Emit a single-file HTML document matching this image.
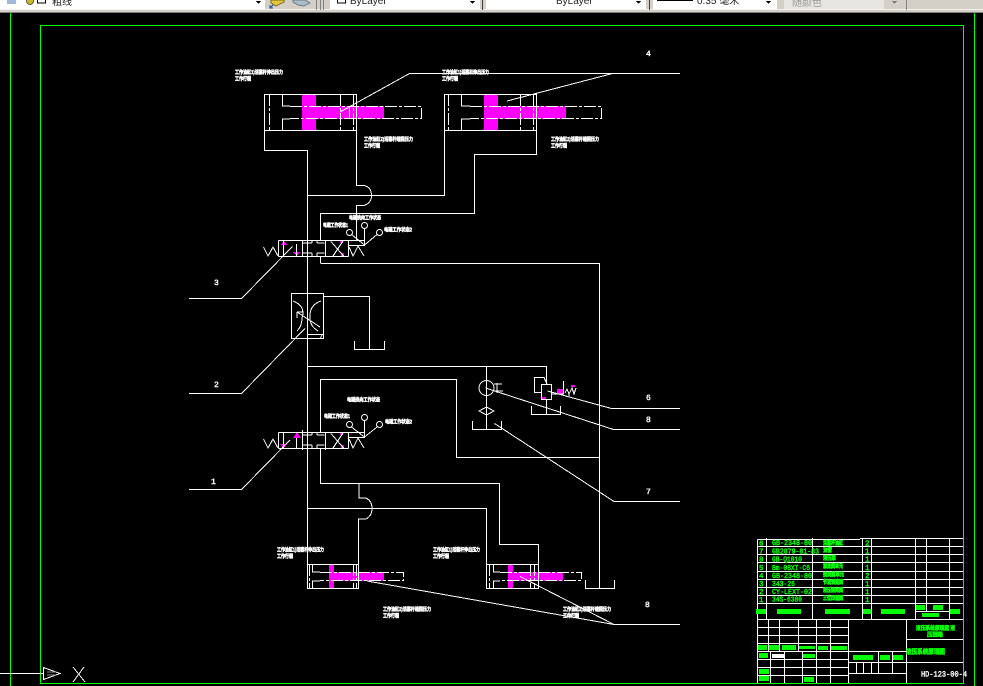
<!DOCTYPE html>
<html><head><meta charset="utf-8"><style>
html,body{margin:0;padding:0;background:#000;width:983px;height:686px;overflow:hidden}
svg{display:block;position:absolute;left:0;top:0}
text{font-family:"Liberation Sans","Noto Sans CJK SC",sans-serif}
.w{fill:none;stroke:#fff;stroke-width:1}
.d{fill:none;stroke:#fff;stroke-width:1;stroke-dasharray:12 2 3 2}
.g{fill:none;stroke:#0f0;stroke-width:1}
.t{fill:#fff;stroke:#fff;stroke-width:.5;font-size:5.5px;font-weight:bold}
.n{fill:#fff;stroke:#fff;stroke-width:.4;font-size:8px;font-family:"Liberation Mono",monospace}
.c{fill:#0f0;stroke:#0f0;stroke-width:.45;font-size:7.5px;font-family:"Liberation Mono",monospace}
.m{fill:#0f0;stroke:#0f0;stroke-width:.55;font-size:6px;font-weight:bold}
</style></head><body>
<svg width="983" height="686" viewBox="0 0 983 686" xmlns="http://www.w3.org/2000/svg" shape-rendering="crispEdges">
<rect width="983" height="686" fill="#000"/>
<!-- toolbar -->
<rect width="983" height="11" fill="#d4d0c8"/>
<rect y="9" width="983" height="1" fill="#f2f1ec"/>
<rect y="10" width="983" height="2" fill="#d4d0c8"/>
<rect y="12" width="983" height="1" fill="#808080"/>
<rect width="265" height="9" fill="#fff"/>
<rect x="330" width="150" height="9" fill="#fff"/>
<rect x="486" width="160" height="9" fill="#fff"/>
<rect x="653" width="124" height="9" fill="#fff"/>
<rect x="784" width="100" height="9" fill="#e8e6e0"/>
<rect x="884" width="20" height="9" fill="#d4d0c8"/>
<rect x="906" width="1" height="10" fill="#808080"/>
<rect x="316" width="1" height="10" fill="#808080"/><rect x="320" width="1" height="10" fill="#808080"/><rect x="323" width="1" height="10" fill="#808080"/>
<rect x="482" width="1" height="10" fill="#404040"/><rect x="649" width="1" height="10" fill="#404040"/>
<rect x="7" y="0" width="9" height="4" fill="#9fb9d8"/>
<circle cx="30" cy="1" r="3.5" fill="#c8b820" stroke="#665"/>
<rect x="37.500" y="-3" width="8" height="6" fill="#fff" stroke="#000"/>
<text x="52" y="5" font-size="10" fill="#222">粗线</text>
<path d="M256 1h5l-2.500 3z" fill="#000"/>
<path d="M271 0h13v2l-8 4-5-3z" fill="#e5c63c" stroke="#776a20"/>
<path d="M270 8l3-3M270 5v3h3" stroke="#1c4fa0" fill="none"/>
<path d="M293 0h12l5 3-6 3-6-1-5-3z" fill="#a9bcc8" stroke="#6a7a86"/>
<rect x="337.500" y="-3" width="8" height="6" fill="#fff" stroke="#000"/>
<text x="350" y="4" font-size="10" fill="#222">ByLayer</text>
<path d="M470 1h5l-2.500 3z" fill="#000"/>
<text x="556" y="4" font-size="10" fill="#222">ByLayer</text>
<path d="M636 1h5l-2.500 3z" fill="#000"/>
<rect x="657" y="0" width="36" height="1" fill="#000"/>
<text x="697" y="4" font-size="10" fill="#222">0.35 毫米</text>
<path d="M766 1h5l-2.500 3z" fill="#000"/>
<text x="792" y="6" font-size="10" fill="#999">随颜色</text>
<path d="M892 1h5l-2.500 3z" fill="#777"/>

<!-- frame -->
<path class="g" d="M10.500 13V686M974.500 13V686M40.500 25.500H963.500V683.500H40.500Z"/>

<!-- magenta -->
<g fill="#f0f">
<rect x="302" y="94" width="14" height="37"/><rect x="302" y="106" width="82" height="13"/>
<rect x="484" y="94" width="14" height="37"/><rect x="484" y="106" width="82" height="13"/>
<rect x="329" y="564" width="5" height="25"/><rect x="329" y="572" width="55" height="9"/>
<rect x="508" y="564" width="5" height="25"/><rect x="508" y="572" width="55" height="9"/>
<rect x="340" y="240" width="3" height="3"/><rect x="341" y="253" width="3" height="4"/>
<rect x="340" y="432" width="3" height="3"/><rect x="341" y="445" width="3" height="4"/>
<path d="M284 241l-3.500 4h7zM293 252h7.500l-3.800 4z"/>
<path d="M297 432l-4 6h8zM280 444h7l-3.500 4.500z"/>
<rect x="557" y="389" width="7" height="5"/><rect x="571" y="385" width="4" height="2"/><rect x="542" y="397" width="4" height="2"/>
</g>

<!-- piping -->
<path class="w" d="M264.500 94.500H356.500V130.500H264.500ZM264.500 130.500V150.500H307.500V588.500H358.500V519H366Q372 516 372 508Q372 501 366 498H359V483.500M320.500 263V256.500M320.500 240V213.500H474.500V154.500H536.500V94.500H444.500V195.500H307.500M444.500 130.500H536.500M356.500 130.500V185.500H364Q371.500 187 371.500 195.500Q371.500 203 364 205.500H356.500V240M320.500 263.500H599.500V588.500M585.500 580V588.500H614.500V580M307.500 366.500H546.500V384M320.500 432V379.500H456.500V457.500H599.500M320.500 449V483.500H499.500V544.500H538.500V588.500H486.500V508.500H307.500M307.500 564.500H358.500M486.500 564.500H538.500"/>
<path class="w" d="M486.500 366.500V429.500M472.500 421V429.500H501.500V421M546.500 400V414.500M531.500 406V414.500H560.500V406M541.500 384.500H551.500V399.500H541.500ZM541.500 392.500H534.500V377.500H544L547 384M563.500 381V394M551.500 394H564"/>
<circle class="w" cx="486.500" cy="388" r="7.500" shape-rendering="auto"/>
<path class="w" d="M479 411L486.500 407L494 411L486.500 415ZM494 384H502M494 391H503M497 383V393"/>
<path class="w" d="M565 393l2-4 2 5 3-6 2 6 2-6M569 396v-2"/>
<!-- cylinder inner -->
<path class="w" d="M282.500 94V106H290M282.500 130V119H290M461.500 94V106H470M461.500 130V119H470M312.500 564V572H320M312.500 588V581H320M493.500 564V572H500M493.500 588V581H500"/>
<path class="d" d="M269.500 94V130M340.500 94V130M353.500 94V130M448.500 94V130M520.500 94V130M533.500 94V130M349.500 106V118M309.500 564V588M353.500 564V588M356.500 564V588M489.500 564V588M530.500 564V588M534.500 564V588"/>
<path class="d" d="M290 106.500H421.500V118.500H290M470 106.500H601.500V118.500H470M320 572.500H403.500V580.500H320M500 572.500H581.500V580.500H500"/>

<!-- leaders -->
<path class="w" d="M680 73.500H409.500L340 112M612.500 73.500L507 101M189 298.500H241.500L292.500 246.500M189 393.500H241.500L305 328.500M189 489.500H241.500L290 440M680 408.500H611.500L547.500 391M680 429.500H613.500L485.500 388M680 501.500H614L494.500 423.500M680 624.500H614L520 576.500M614 624.500L367 581"/>

<!-- upper valve -->
<g id="v1">
<path class="w" d="M278.500 240.500H364.500V245.500H348.500M278.500 256.500H348.500M278.500 240.500V256.500M302.500 240.500V256.500M325.500 240.500V256.500M348.500 240.500V256.500M283.500 240.500V256.500M296.500 244V256.500"/>
<path class="w" d="M302 243H312M317 243H324.500M302 253H312M317 253H324.500M312 243V240M317 243V240M312 253V256M317 253V256"/>
<path class="w" d="M331 241.500L343.500 256M333 256L343 241"/>
<path class="w" d="M263.500 247L268 256L273 247L278 256M349 247L353 256L358 246L364 256"/>
<path class="w" d="M364.500 245L351.500 234.500M364.500 245V228.500M364.500 245L377 234.500"/>
<g shape-rendering="auto"><circle class="w" cx="349.500" cy="232.500" r="3"/><circle class="w" cx="364.500" cy="225.500" r="3"/><circle class="w" cx="379.500" cy="232.500" r="3"/></g>
</g>
<!-- lower valve -->
<g>
<path class="w" d="M278.500 432.500H364.500V437.500H348.500M278.500 448.500H348.500M278.500 432.500V448.500M302.500 430V450M325.500 432.500V450M348.500 432.500V448.500M283.500 432.500V448.500M296.500 438V448.500"/>
<path class="w" d="M302 435H312M317 435H324.500M302 445H312M317 445H324.500M312 435V432M317 435V432M312 445V448M317 445V448"/>
<path class="w" d="M331 433.500L343.500 448M333 448L343 433"/>
<path class="w" d="M263.500 439L268 448L273 439L278 448M349 439L353 448L358 438L364 448"/>
<path class="w" d="M364.500 437L351.500 427M364.500 437V421M364.500 437L377 427"/>
<g shape-rendering="auto"><circle class="w" cx="349.500" cy="424.500" r="3"/><circle class="w" cx="364.500" cy="417.500" r="3"/><circle class="w" cx="379.500" cy="424.500" r="3"/></g>
</g>
<!-- flow control -->
<path class="w" d="M291.500 293.500H323.500V338.500H291.500ZM323.500 296.500H369.500V349.500M354.500 341V349.500H384.500V341M307.500 334.500H323.500M322 335L320 339"/>
<path class="w" d="M293 301Q306 306 302 318Q302 326 297 331M321 301Q309 305 310 318Q310 326 318 331M297 312L320 327M297 312V318M297 312H303"/>

<!-- arrow -->
<path class="w" d="M0 673.500H43"/>
<path class="w" d="M43.500 667.500V679.500L60 673.500Z"/>
<path d="M47 672H56M47 675H56" stroke="#888"/>
<path class="w" d="M73 667L85 682M84 667L73 682"/>

<!-- table -->
<path class="w" d="M757.500 539.500H860M860 538.500H963M757.500 546.500H963M757.500 554.500H963M757.500 562.500H963M757.500 571.500H963M757.500 579.500H963M757.500 587.500H963M757.500 595.500H963M757.500 603.500H963M757.500 619.500H963"/>
<path class="w" d="M757.500 539.500V683M766.500 538V619M812.500 538V619M862.500 538V619M871.500 538V619M915.500 538V619M926.500 538V611M949.500 538V619M915.500 611.500H949.500"/>
<path class="w" d="M768.500 619V651M779.500 619V651M798.500 619V651M816.500 619V683M830.500 619V683M848.500 619V683M770.500 651V683M784.500 651V683M802.500 651V683"/>
<path class="w" d="M757.500 627.500H848M757.500 635.500H848M757.500 643.500H848M757.500 651.500H906M757.500 659.500H848M757.500 667.500H848M757.500 675.500H848"/>
<path class="w" d="M906.500 619V683M906.500 639.500H963M848 662.500H963M848 673.500H906M856.500 662V673M863.500 662V673M871.500 662V673M878.500 651V673M892.500 651V673"/>
<g fill="#0f0">
<rect x="756" y="609" width="10" height="5"/><rect x="777" y="609" width="24" height="5"/><rect x="825" y="609" width="25" height="5"/><rect x="863" y="609" width="8" height="5"/><rect x="881" y="609" width="24" height="5"/><rect x="950" y="609" width="10" height="5"/>
<rect x="916" y="605" width="9" height="5"/><rect x="933" y="605" width="10" height="5"/><rect x="922" y="613" width="17" height="4"/>
<rect x="758" y="645" width="9" height="5"/><rect x="769" y="645" width="10" height="5"/><rect x="782" y="645" width="14" height="5"/><rect x="799" y="646" width="16" height="3"/><rect x="818" y="646" width="10" height="4"/><rect x="831" y="646" width="16" height="4"/>
<rect x="759" y="653" width="9" height="5"/><rect x="803" y="654" width="12" height="4"/>
<rect x="759" y="669" width="10" height="5"/><rect x="759" y="676" width="10" height="5"/><rect x="804" y="677" width="10" height="5"/>
<rect x="853" y="655" width="20" height="5"/><rect x="880" y="655" width="10" height="5"/><rect x="893" y="655" width="10" height="5"/>
</g>
<rect x="772" y="654" width="12" height="4" fill="#fff"/>

<g text-rendering="geometricPrecision">
<text class="c" x="759" y="545.500">6</text><text class="c" x="759" y="553.500">7</text><text class="c" x="759" y="561.500">8</text><text class="c" x="759" y="570">5</text><text class="c" x="759" y="578">4</text><text class="c" x="759" y="586">3</text><text class="c" x="759" y="594">2</text><text class="c" x="759" y="602">1</text>
<text class="c" x="772" y="545" textLength="40" lengthAdjust="spacingAndGlyphs">GB-2348-80</text>
<text class="c" x="772" y="553.500" textLength="47" lengthAdjust="spacingAndGlyphs">GB2879-81-83</text>
<text class="c" x="772" y="561.500" textLength="30" lengthAdjust="spacingAndGlyphs">GB-Q1010</text>
<text class="c" x="772" y="570" textLength="38" lengthAdjust="spacingAndGlyphs">Bm-08XT-C6</text>
<text class="c" x="772" y="578" textLength="40" lengthAdjust="spacingAndGlyphs">GB-2348-80</text>
<text class="c" x="772" y="586" textLength="23" lengthAdjust="spacingAndGlyphs">343-26</text>
<text class="c" x="772" y="594" textLength="40" lengthAdjust="spacingAndGlyphs">CY-LEXT-02</text>
<text class="c" x="772" y="601.500" textLength="30" lengthAdjust="spacingAndGlyphs">34S-6380</text>
<text class="m" x="823" y="545" textLength="20" lengthAdjust="spacingAndGlyphs">活塞杆油缸</text>
<text class="m" x="823" y="552" textLength="9" lengthAdjust="spacingAndGlyphs">油管</text>
<text class="m" x="823" y="560" textLength="13" lengthAdjust="spacingAndGlyphs">液压泵</text>
<text class="m" x="823" y="568" textLength="20" lengthAdjust="spacingAndGlyphs">溢流阀单元</text>
<text class="m" x="823" y="576.500" textLength="21" lengthAdjust="spacingAndGlyphs">换向阀单元</text>
<text class="m" x="823" y="584" textLength="20" lengthAdjust="spacingAndGlyphs">节流调速阀</text>
<text class="m" x="823" y="592" textLength="20" lengthAdjust="spacingAndGlyphs">液压换向阀</text>
<text class="m" x="823" y="600" textLength="20" lengthAdjust="spacingAndGlyphs">三位四通阀</text>
<text class="c" x="865" y="545.500">2</text><text class="c" x="865" y="553.500">1</text><text class="c" x="865" y="561.500">1</text><text class="c" x="865" y="570">1</text><text class="c" x="865" y="578">2</text><text class="c" x="865" y="586">1</text><text class="c" x="865" y="594">1</text><text class="c" x="865" y="602">1</text>
<text class="m" x="916" y="630" textLength="39" lengthAdjust="spacingAndGlyphs">液压系统原理图 液</text>
<text class="m" x="927" y="636.500" textLength="16" lengthAdjust="spacingAndGlyphs">压回路</text>
<text class="m" x="906" y="654" style="font-size:7px" textLength="39" lengthAdjust="spacingAndGlyphs">液压系统原理图</text>
<text x="921" y="676.500" fill="#fff" stroke="#fff" stroke-width=".4" font-size="8" style="font-family:'Liberation Mono',monospace" textLength="46" lengthAdjust="spacingAndGlyphs">HD-123-00-4</text>

<text class="n" x="646" y="56">4</text><text class="n" x="214" y="285">3</text><text class="n" x="214" y="387">2</text><text class="n" x="211" y="484">1</text><text class="n" x="646" y="400">6</text><text class="n" x="646" y="422">8</text><text class="n" x="646" y="494">7</text><text class="n" x="645" y="607">8</text>

<text class="t" x="235" y="74" textLength="48" lengthAdjust="spacingAndGlyphs">工作油缸1)活塞杆伸出压力</text><text class="t" x="235" y="80.500" textLength="16" lengthAdjust="spacingAndGlyphs">工作行程</text>
<text class="t" x="364" y="141" textLength="49" lengthAdjust="spacingAndGlyphs">工作油缸2)活塞杆缩回压力</text><text class="t" x="364" y="147.500" textLength="16" lengthAdjust="spacingAndGlyphs">工作行程</text>
<text class="t" x="442" y="74" textLength="47" lengthAdjust="spacingAndGlyphs">工作油缸1)活塞杆伸出压力</text><text class="t" x="442" y="80.500" textLength="16" lengthAdjust="spacingAndGlyphs">工作行程</text>
<text class="t" x="551" y="141" textLength="48" lengthAdjust="spacingAndGlyphs">工作油缸2)活塞杆缩回压力</text><text class="t" x="551" y="147.500" textLength="16" lengthAdjust="spacingAndGlyphs">工作行程</text>
<text class="t" x="349" y="219.500" textLength="32" lengthAdjust="spacingAndGlyphs">电磁换向工作状态</text>
<text class="t" x="323" y="227" textLength="25" lengthAdjust="spacingAndGlyphs">电磁工作状态1</text>
<text class="t" x="384" y="231.500" textLength="28" lengthAdjust="spacingAndGlyphs">电磁工作状态2</text>
<text class="t" x="347" y="401.500" textLength="33" lengthAdjust="spacingAndGlyphs">电磁换向工作状态</text>
<text class="t" x="324" y="418" textLength="26" lengthAdjust="spacingAndGlyphs">电磁工作状态1</text>
<text class="t" x="385" y="423.500" textLength="27" lengthAdjust="spacingAndGlyphs">电磁工作状态2</text>
<text class="t" x="277" y="551.500" textLength="47" lengthAdjust="spacingAndGlyphs">工作油缸1)活塞杆伸出压力</text><text class="t" x="277" y="558" textLength="16" lengthAdjust="spacingAndGlyphs">工作行程</text>
<text class="t" x="433" y="551.500" textLength="47" lengthAdjust="spacingAndGlyphs">工作油缸1)活塞杆伸出压力</text><text class="t" x="433" y="558" textLength="16" lengthAdjust="spacingAndGlyphs">工作行程</text>
<text class="t" x="383" y="611" textLength="48" lengthAdjust="spacingAndGlyphs">工作油缸2)活塞杆缩回压力</text><text class="t" x="383" y="617.500" textLength="16" lengthAdjust="spacingAndGlyphs">工作行程</text>
<text class="t" x="563" y="611" textLength="48" lengthAdjust="spacingAndGlyphs">工作油缸2)活塞杆缩回压力</text><text class="t" x="563" y="617.500" textLength="16" lengthAdjust="spacingAndGlyphs">工作行程</text>
</g>
</svg>
</body></html>
